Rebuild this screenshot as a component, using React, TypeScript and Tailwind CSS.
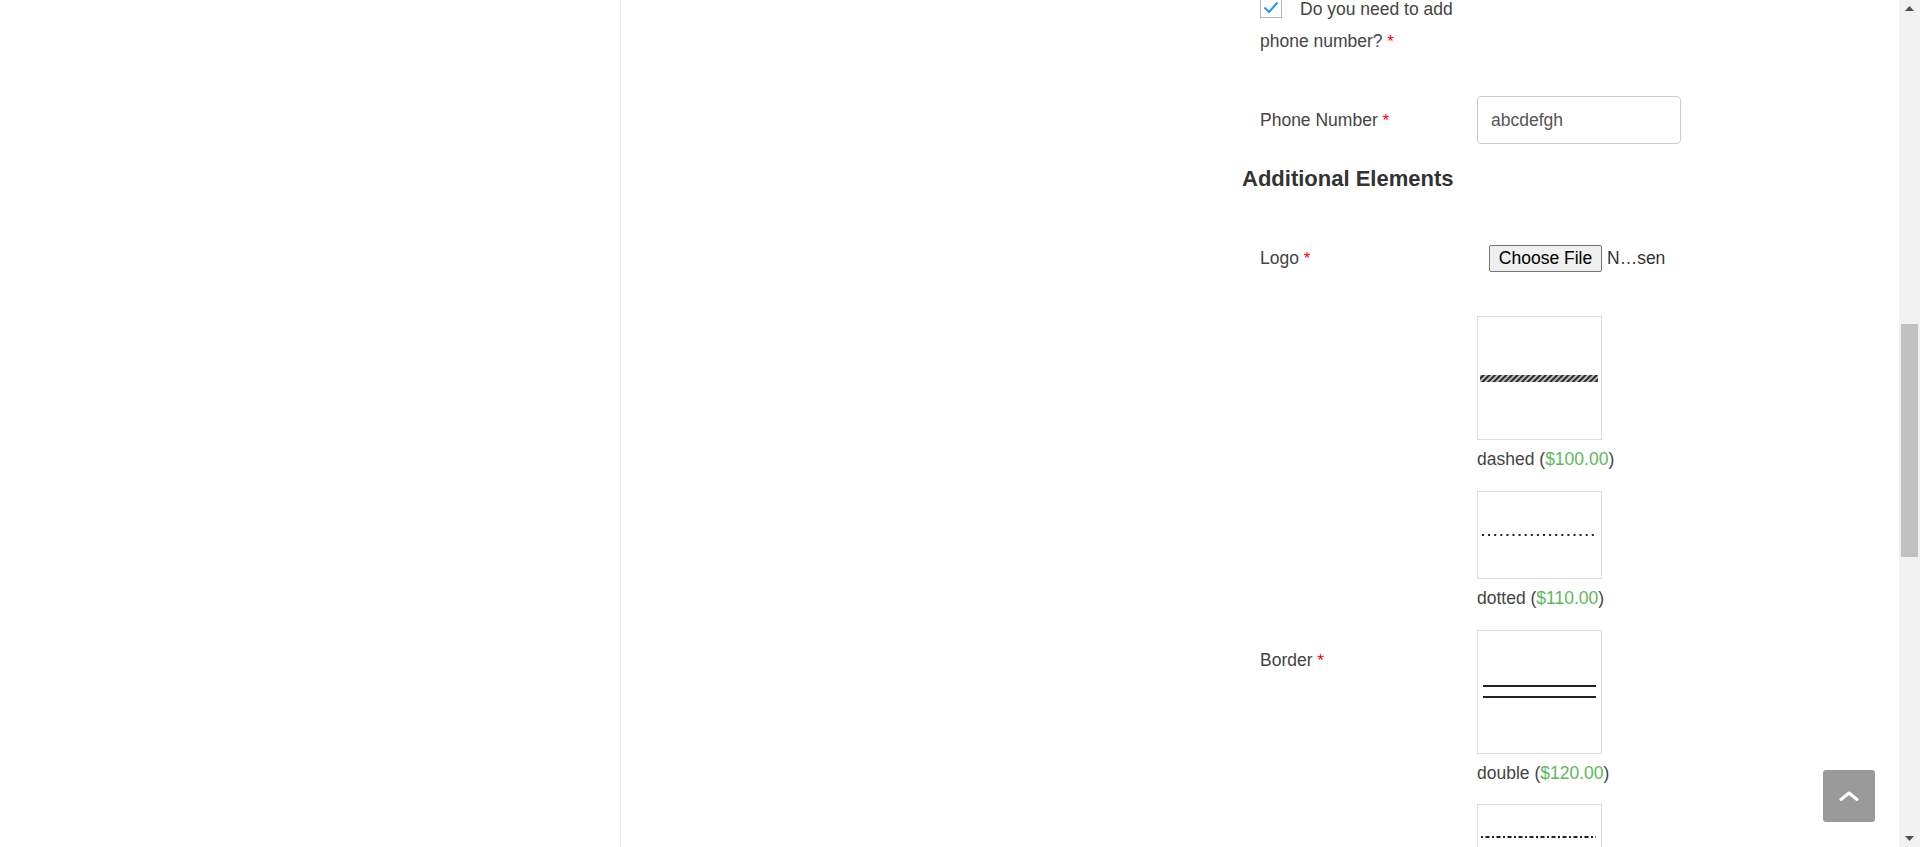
import React from "react";

const Req = () => <span className="text-[#ff0000] text-[17px]"> *</span>;

function Caption({ name, price }: { name: string; price: string }) {
  return (
    <div className="mt-[7px] leading-[25px] text-[17.5px] text-[#444]">
      {name} (<span className="text-[#5cb85c]">{price}</span>)
    </div>
  );
}

function Box({ h, children }: { h: number; children: React.ReactNode }) {
  return (
    <div
      className={`w-[125px] border border-[#dddddd] bg-white ${h === 124 ? "h-[124px]" : "h-[88px]"}`}
    >
      {children}
    </div>
  );
}

export default function App() {
  return (
    <div className="relative flex h-[847px] w-[1920px] overflow-hidden bg-white font-['Liberation_Sans',Arial,sans-serif]">
      <div className="flex flex-1">
        <div className="w-[621px] shrink-0 border-r border-[#eeeeee]" />
        <div className="flex-1 pl-[621px]">
          {/* checkbox row */}
          <div className="-mt-[7px] pl-[18px]">
            <div className="w-[200px] leading-[32px] text-[17.5px] text-[#444]">
              <span className="relative -top-[3px] mr-[18px] inline-flex h-[22px] w-[22px] items-center justify-center border border-[#b5b5b5] bg-white align-middle">
                <svg width="18" height="18" viewBox="0 0 18 18">
                  <polyline points="2.5,9.5 7,14 15.5,4.5" fill="none" stroke="#2196f3" strokeWidth="2" />
                </svg>
              </span>
              Do you need to add phone number?
              <Req />
            </div>
          </div>

          {/* phone row */}
          <div className="mt-[38px] grid grid-cols-[217px_204px] items-center pl-[18px]">
            <div className="text-[17.5px] text-[#444]">
              Phone Number
              <Req />
            </div>
            <div className="flex h-[48px] w-[204px] items-center rounded-[4px] border border-[#cccccc] px-[13px] text-[17.5px] text-[#555]">
              abcdefgh
            </div>
          </div>

          {/* heading */}
          <h3 className="mt-[23px] text-[22px] font-bold leading-[24px] text-[#333]">Additional Elements</h3>

          {/* logo row */}
          <div className="mt-[47px] grid h-[40px] grid-cols-[217px_auto] items-center pl-[18px]">
            <div className="text-[17.5px] text-[#444]">
              Logo
              <Req />
            </div>
            <div className="flex items-center">
              <span className="ml-[12px] flex h-[27px] w-[113px] items-center justify-center rounded-[2px] border border-[#767676] bg-[#efefef] text-[17.5px] text-black">
                Choose File
              </span>
              <span className="ml-[5px] text-[17.5px] text-[#333]">N…sen</span>
            </div>
          </div>

          {/* border row */}
          <div className="mt-[38px] grid grid-cols-[217px_auto] items-center pl-[18px]">
            <div className="text-[17.5px] text-[#444]">
              Border
              <Req />
            </div>
            <div className="flex flex-col pb-[44px]">
              <div>
                <Box h={124}>
                  <svg width="123" height="122" viewBox="0 0 123 122">
                    <defs>
                      <pattern id="hatch" width="4" height="4" patternUnits="userSpaceOnUse" patternTransform="rotate(45)">
                        <rect x="0" y="0" width="2.2" height="4" fill="#2a2a2a" />
                      </pattern>
                    </defs>
                    <rect x="2" y="58" width="118" height="7" fill="#cfcfcf" />
                    <rect x="2" y="58" width="118" height="7" fill="url(#hatch)" />
                  </svg>
                </Box>
                <Caption name="dashed" price="$100.00" />
              </div>
              <div className="mt-[19px]">
                <Box h={88}>
                  <svg width="123" height="86" viewBox="0 0 123 86">
                    <line x1="4" y1="43" x2="118" y2="43" stroke="#222" strokeWidth="2" strokeDasharray="2 4.1" />
                  </svg>
                </Box>
                <Caption name="dotted" price="$110.00" />
              </div>
              <div className="mt-[19px]">
                <Box h={124}>
                  <svg width="123" height="122" viewBox="0 0 123 122">
                    <line x1="5" y1="55" x2="118" y2="55" stroke="#222" strokeWidth="2" />
                    <line x1="5" y1="66" x2="118" y2="66" stroke="#222" strokeWidth="2" />
                  </svg>
                </Box>
                <Caption name="double" price="$120.00" />
              </div>
              <div className="mt-[18px]">
                <Box h={124}>
                  <svg width="123" height="122" viewBox="0 0 123 122">
                    <line x1="3" y1="32" x2="118" y2="32" stroke="#222" strokeWidth="2" strokeDasharray="2 2.5 4 2.5" />
                  </svg>
                </Box>
                <Caption name="dashdot" price="$130.00" />
              </div>
            </div>
          </div>
        </div>
      </div>

      {/* scrollbar */}
      <div className="flex w-[21px] shrink-0 flex-col bg-[#f1f1f1]">
        <div className="flex h-[17px] items-center justify-center">
          <svg width="9" height="5" viewBox="0 0 9 5">
            <polygon points="0,5 4.5,0 9,5" fill="#505050" />
          </svg>
        </div>
        <div className="flex-1">
          <div className="mx-[2px] mt-[307px] h-[233px] bg-[#c1c1c1]" />
        </div>
        <div className="flex h-[17px] items-center justify-center">
          <svg width="9" height="5" viewBox="0 0 9 5">
            <polygon points="0,0 4.5,5 9,0" fill="#505050" />
          </svg>
        </div>
      </div>

      {/* back to top */}
      <div className="absolute bottom-[25px] right-[45px] flex h-[52px] w-[52px] items-center justify-center rounded-[3px] bg-[#9a9a9a]">
        <svg width="20" height="10" viewBox="0 0 20 10">
          <polyline points="2,8.5 10,2 18,8.5" fill="none" stroke="#fff" strokeWidth="3" strokeLinecap="round" strokeLinejoin="round" />
        </svg>
      </div>
    </div>
  );
}
